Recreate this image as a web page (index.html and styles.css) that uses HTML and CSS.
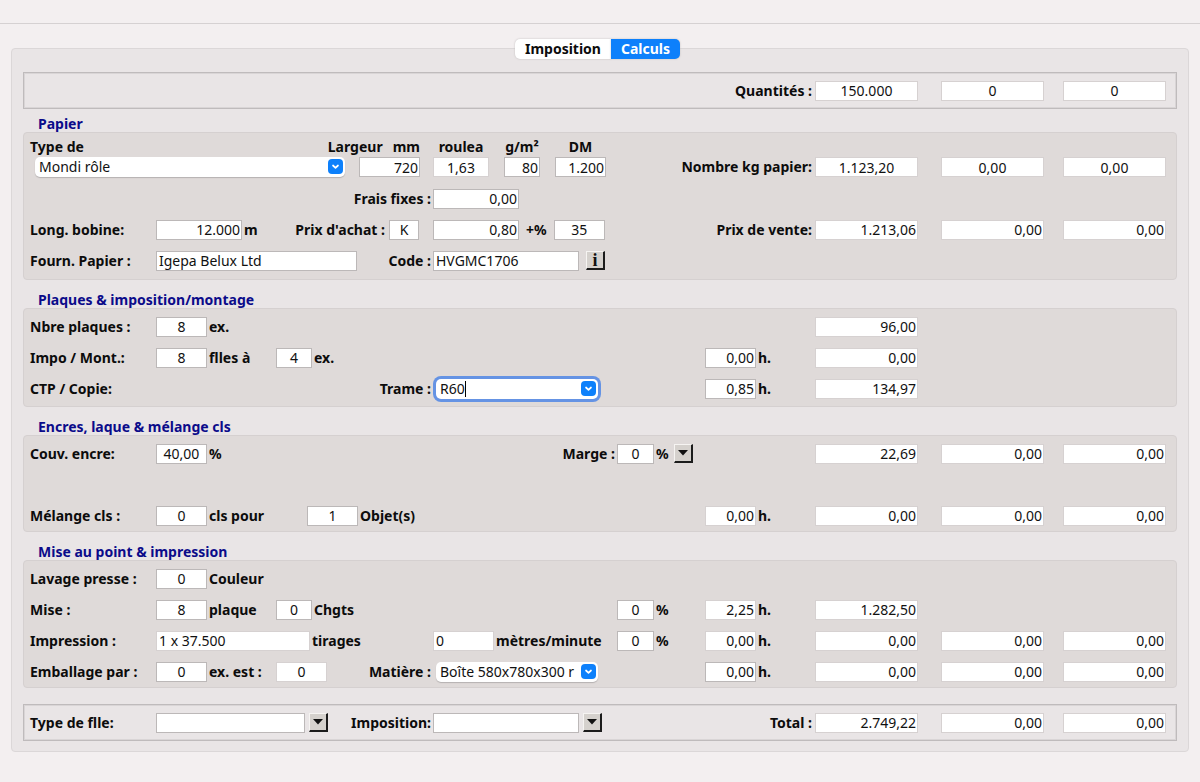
FILE: index.html
```html
<!DOCTYPE html>
<html lang="fr">
<head>
<meta charset="utf-8">
<title>Calculs</title>
<link rel="stylesheet" href="styles.css">
</head>
<body>
<svg class="defs" aria-hidden="true">
  <symbol id="chev" viewBox="0 0 15 15"><path d="M5 6.5 7.5 8.8 10 6.5" fill="none" stroke="#fff" stroke-width="1.7" stroke-linecap="round" stroke-linejoin="round"/></symbol>
  <symbol id="tri" viewBox="0 0 10 6"><path d="M0 0h10L5 5.500z" fill="#111"/></symbol>
</svg>
<div class="topbar"></div>
<main class="window">
  <nav class="tabs">
    <button class="tab" type="button">Imposition</button><button class="tab active" type="button">Calculs</button>
  </nav>
  <form class="sheet">
    <div class="frame">
      <div class="row">
        <label class="cell lead" for="qte1">Quantités :</label>
        <div class="cell q1"><input id="qte1" class="flat q center" value="150.000"></div>
        <div class="cell q2"><input aria-label="Quantité 2" class="flat q center" value="0"></div>
        <div class="cell q3"><input aria-label="Quantité 3" class="flat q center" value="0"></div>
      </div>
    </div>

    <h2>Papier</h2>
    <section class="panel paper">
      <div class="row heads">
        <label class="cell c1" for="papier">Type de</label>
        <div class="cell c3 right"><label for="largeur">Largeur</label><span class="unit">mm</span></div>
        <div class="cell c4 specs"><label class="w-roll" for="rouleau">roulea</label><label class="w-xs" for="gm">g/m²</label><label class="w-s" for="dm">DM</label></div>
      </div>
      <div class="row fields">
        <div class="cell c1to3"><span class="picker grow"><select id="papier"><option>Mondi rôle</option></select><svg class="chev" aria-hidden="true"><use href="#chev"/></svg></span><input id="largeur" class="w-m num" value="720"></div>
        <div class="cell c4 specs"><input id="rouleau" class="flat w-roll center" value="1,63"><input id="gm" class="w-xs num" value="80"><input id="dm" class="w-s num" value="1.200"></div>
        <label class="cell lead" for="kg1">Nombre kg papier:</label>
        <div class="cell q1"><input id="kg1" class="flat q center" value="1.123,20"></div>
        <div class="cell q2"><input aria-label="Nombre kg papier 2" class="flat q center" value="0,00"></div>
        <div class="cell q3"><input aria-label="Nombre kg papier 3" class="flat q center" value="0,00"></div>
      </div>
      <div class="row">
        <label class="cell c3 right" for="frais">Frais fixes :</label>
        <div class="cell c4"><input id="frais" class="w-l num" value="0,00"></div>
      </div>
      <div class="row">
        <label class="cell c1" for="bobine">Long. bobine:</label>
        <div class="cell c2"><input id="bobine" class="w-l num" value="12.000"><span>m</span></div>
        <div class="cell c3 right achat"><label for="achat">Prix d'achat :</label><input id="achat" class="w-k center" value="K"></div>
        <div class="cell c4 price"><input aria-label="Prix" class="w-l num" value="0,80"><label for="pct">+%</label><input id="pct" class="w-s center" value="35"></div>
        <label class="cell lead" for="vente1">Prix de vente:</label>
        <div class="cell q1"><input id="vente1" class="flat q num" value="1.213,06"></div>
        <div class="cell q2"><input aria-label="Prix de vente 2" class="flat q num" value="0,00"></div>
        <div class="cell q3"><input aria-label="Prix de vente 3" class="flat q num" value="0,00"></div>
      </div>
      <div class="row">
        <label class="cell c1" for="fourn">Fourn. Papier :</label>
        <div class="cell c2"><input id="fourn" class="w-xl" value="Igepa Belux Ltd"></div>
        <label class="cell c3 right" for="code">Code :</label>
        <div class="cell c4 code"><input id="code" class="w-code" value="HVGMC1706"><button class="bevel info" type="button" aria-label="Informations">i</button></div>
      </div>
    </section>

    <h2>Plaques &amp; imposition/montage</h2>
    <section class="panel plates">
      <div class="row">
        <label class="cell c1" for="plaques">Nbre plaques :</label>
        <div class="cell c2"><input id="plaques" class="w-s center" value="8"><span>ex.</span></div>
        <div class="cell q1"><input aria-label="Coût plaques" class="flat q num" value="96,00"></div>
      </div>
      <div class="row">
        <label class="cell c1" for="impo">Impo / Mont.:</label>
        <div class="cell c2"><input id="impo" class="w-s center" value="8"><label for="flles">flles à</label></div>
        <div class="cell c3"><input id="flles" class="w-xs center" value="4"><span>ex.</span></div>
        <div class="cell c6"><input id="h1" class="w-s num" value="0,00"><label for="h1">h.</label></div>
        <div class="cell q1"><input aria-label="Coût montage" class="flat q num" value="0,00"></div>
      </div>
      <div class="row">
        <span class="cell c1">CTP / Copie:</span>
        <label class="cell c3 right" for="trame">Trame :</label>
        <div class="cell c4"><span class="picker combo focused"><input id="trame" value="R60"><span class="caret"></span><svg class="chev" aria-hidden="true"><use href="#chev"/></svg></span></div>
        <div class="cell c6"><input id="h2" class="w-s num" value="0,85"><label for="h2">h.</label></div>
        <div class="cell q1"><input aria-label="Coût copie" class="flat q num" value="134,97"></div>
      </div>
    </section>

    <h2>Encres, laque &amp; mélange cls</h2>
    <section class="panel">
      <div class="row">
        <label class="cell c1" for="encre">Couv. encre:</label>
        <div class="cell c2"><input id="encre" class="w-s center" value="40,00"><span>%</span></div>
        <label class="cell c4 right" for="marge">Marge :</label>
        <div class="cell c5"><input id="marge" class="w-s2 center" value="0"><span class="percent">%</span><button class="bevel" type="button" aria-label="Choisir la marge"><svg class="tri" aria-hidden="true"><use href="#tri"/></svg></button></div>
        <div class="cell q1"><input aria-label="Coût encre 1" class="flat q num" value="22,69"></div>
        <div class="cell q2"><input aria-label="Coût encre 2" class="flat q num" value="0,00"></div>
        <div class="cell q3"><input aria-label="Coût encre 3" class="flat q num" value="0,00"></div>
      </div>
      <div class="row"></div>
      <div class="row">
        <label class="cell c1" for="melange">Mélange cls :</label>
        <div class="cell c2"><input id="melange" class="w-s center" value="0"><label for="objets">cls pour</label></div>
        <div class="cell c3 indent"><input id="objets" class="w-s center" value="1"><span>Objet(s)</span></div>
        <div class="cell c6"><input id="h3" class="flat w-s num" value="0,00"><label for="h3">h.</label></div>
        <div class="cell q1"><input aria-label="Coût mélange 1" class="flat q num" value="0,00"></div>
        <div class="cell q2"><input aria-label="Coût mélange 2" class="flat q num" value="0,00"></div>
        <div class="cell q3"><input aria-label="Coût mélange 3" class="flat q num" value="0,00"></div>
      </div>
    </section>

    <h2>Mise au point &amp; impression</h2>
    <section class="panel">
      <div class="row">
        <label class="cell c1" for="lavage">Lavage presse :</label>
        <div class="cell c2"><input id="lavage" class="w-s center" value="0"><span>Couleur</span></div>
      </div>
      <div class="row">
        <label class="cell c1" for="mise">Mise :</label>
        <div class="cell c2"><input id="mise" class="w-s center" value="8"><span>plaque</span></div>
        <div class="cell c3"><input id="chgts" class="w-xs center" value="0"><label for="chgts">Chgts</label></div>
        <div class="cell c5"><input id="p1" class="w-s2 center" value="0"><label for="p1">%</label></div>
        <div class="cell c6"><input id="h4" class="flat w-s num" value="2,25"><label for="h4">h.</label></div>
        <div class="cell q1"><input aria-label="Coût mise" class="flat q num" value="1.282,50"></div>
      </div>
      <div class="row">
        <label class="cell c1" for="tirages">Impression :</label>
        <div class="cell c2to3"><input id="tirages" class="flat w-run" value="1 x 37.500"><span>tirages</span></div>
        <div class="cell c4"><input id="vitesse" class="flat w-m" value="0"><label for="vitesse">mètres/minute</label></div>
        <div class="cell c5"><input id="p2" class="w-s2 center" value="0"><label for="p2">%</label></div>
        <div class="cell c6"><input id="h5" class="flat w-s num" value="0,00"><label for="h5">h.</label></div>
        <div class="cell q1"><input aria-label="Coût impression 1" class="flat q num" value="0,00"></div>
        <div class="cell q2"><input aria-label="Coût impression 2" class="flat q num" value="0,00"></div>
        <div class="cell q3"><input aria-label="Coût impression 3" class="flat q num" value="0,00"></div>
      </div>
      <div class="row">
        <label class="cell c1" for="emballage">Emballage par :</label>
        <div class="cell c2"><input id="emballage" class="w-s center" value="0"><label for="est">ex. est :</label></div>
        <div class="cell c3"><input id="est" class="flat w-s center" value="0"></div>
        <label class="cell c3 right" for="matiere">Matière :</label>
        <div class="cell c4"><span class="picker combo"><select id="matiere"><option>Boîte 580x780x300 r</option></select><svg class="chev" aria-hidden="true"><use href="#chev"/></svg></span></div>
        <div class="cell c6"><input id="h6" class="w-s num" value="0,00"><label for="h6">h.</label></div>
        <div class="cell q1"><input aria-label="Coût emballage 1" class="flat q num" value="0,00"></div>
        <div class="cell q2"><input aria-label="Coût emballage 2" class="flat q num" value="0,00"></div>
        <div class="cell q3"><input aria-label="Coût emballage 3" class="flat q num" value="0,00"></div>
      </div>
    </section>

    <div class="frame total">
      <div class="row">
        <label class="cell c1" for="flle">Type de flle:</label>
        <div class="cell c2 pair"><input id="flle" class="w-type" value=""><button class="bevel" type="button" aria-label="Choisir le type de flle"><svg class="tri" aria-hidden="true"><use href="#tri"/></svg></button></div>
        <label class="cell c3 right" for="imposition">Imposition:</label>
        <div class="cell c4 pair"><input id="imposition" class="w-code" value=""><button class="bevel" type="button" aria-label="Choisir l'imposition"><svg class="tri" aria-hidden="true"><use href="#tri"/></svg></button></div>
        <label class="cell lead" for="total1">Total :</label>
        <div class="cell q1"><input id="total1" class="flat q num" value="2.749,22"></div>
        <div class="cell q2"><input aria-label="Total 2" class="flat q num" value="0,00"></div>
        <div class="cell q3"><input aria-label="Total 3" class="flat q num" value="0,00"></div>
      </div>
    </div>
  </form>
</main>
</body>
</html>
```
FILE: styles.css
```css
* { box-sizing: border-box; }

body {
  margin: 0;
  background: #f3eff0;
  color: #0c0c0c;
  font: bold 14px/18px "Noto Sans", "Open Sans", sans-serif;
}

.defs { display: none; }

.topbar { height: 24px; border-bottom: 1px solid #d5d1d2; }

.window { padding: 15px 11px 24px; }

.tabs {
  position: relative;
  z-index: 1;
  display: flex;
  justify-content: center;
  margin-bottom: -11px;
  padding-right: 5px;
}

.tab {
  height: 20px;
  padding: 0 10px;
  border: 0;
  border-radius: 5px 0 0 5px;
  background: #fff;
  color: #0c0c0c;
  font: inherit;
  box-shadow: 0 0 2px #bdb9ba;
}

.tab.active {
  border-radius: 0 5px 5px 0;
  background: #0d80fb;
  color: #fff;
}

.sheet {
  padding: 23px 11px 10px;
  border: 1px solid #dbd7d8;
  border-radius: 4px;
  background: #e9e5e6;
}

.frame {
  padding: 2px 0;
  border: 1px solid #bfbbbc;
  box-shadow: inset 0 0 0 1px #d9d5d6;
}

.frame.total { margin-top: 16px; }

h2 {
  margin: 12px 0 0 15px;
  color: #0b0b8a;
  font-size: 14px;
  line-height: 16px;
}

.frame + h2 { margin-top: 7px; }

.panel {
  padding: 2px 0 0;
  border: 1px solid #d5d0d0;
  border-radius: 4px;
  background: #dfdad9;
}

.panel.paper { padding: 5px 0 3px; }
.panel.plates { padding-bottom: 2px; }

.row {
  display: grid;
  grid-template-columns: 126fr 120fr 157fr 184fr 88fr 110fr 126fr 122fr 103fr;
  align-items: center;
  height: 31px;
  padding: 0 10px 0 6px;
}

.row.heads { height: 18px; }

.row.fields { height: 22px; margin-bottom: 5px; }

.cell {
  grid-row: 1;
  display: flex;
  align-items: center;
  gap: 2px;
  min-width: 0;
  white-space: nowrap;
}

.c1 { grid-column: 1; }
.c2 { grid-column: 2; }
.c3 { grid-column: 3; }
.c4 { grid-column: 4; }
.c5 { grid-column: 5; }
.c6 { grid-column: 6; }
.q1 { grid-column: 7; }
.q2 { grid-column: 8; }
.q3 { grid-column: 9; }
.c1to3 { grid-column: 1 / 4; gap: 14px; padding: 0 13px 0 5px; }
.c2to3 { grid-column: 2 / 4; }
.lead { grid-column: 5 / 7; justify-content: flex-end; padding-right: 3px; }

.right { justify-content: flex-end; padding-right: 2px; }
.heads .right { gap: 10px; padding-right: 13px; }
.achat { gap: 4px; padding-right: 14px; }
.indent { padding-left: 31px; }
.specs { gap: 15px; }
.specs label { text-align: center; }
.price { gap: 7px; }
.pair { gap: 4px; }
.code { gap: 7px; }
.percent { margin-right: 3px; }

input, select {
  min-width: 0;
  height: 20px;
  margin: 0;
  padding: 0 2px;
  border: 1px solid #bcb8b8;
  border-radius: 0;
  outline: 0;
  background: #fff;
  color: #111;
  font: 14px/18px "Noto Sans", "Open Sans", sans-serif;
}

input { flex: none; }
input.flat { border-color: #d6d1d1; }
input.center { text-align: center; }
input.num { padding-right: 1px; text-align: right; }

.q { width: 103px; }
.w-k { width: 30px; }
.w-xs { width: 36px; }
.w-s2 { width: 37px; }
.w-s { width: 51px; }
.w-roll { width: 56px; }
.w-m { width: 61px; }
.w-l { width: 86px; }
.w-code { width: 146px; }
.w-type { width: 149px; }
.w-run { width: 154px; }
.w-xl { width: 201px; }

.picker {
  position: relative;
  display: flex;
  height: 20px;
  border-radius: 5px;
  background: #fff;
  box-shadow: 0 1px 1px #b5b1b1;
}

.picker.grow { flex: 1; }
.picker.combo { width: 162px; margin-left: 3px; }
.picker.focused { box-shadow: 0 0 0 3px #6593e4; }

.picker select, .picker input {
  flex: 1;
  width: 100%;
  padding: 0 19px 0 4px;
  border: 0;
  border-radius: 5px;
  background: transparent;
  appearance: none;
}

.chev {
  position: absolute;
  top: 2px;
  right: 2px;
  width: 15px;
  height: 15px;
  border-radius: 4px;
  background: #0d80fb;
  pointer-events: none;
}

.caret {
  position: absolute;
  top: 2px;
  left: 29px;
  width: 1px;
  height: 16px;
  background: #000;
}

.bevel {
  display: flex;
  flex: none;
  align-items: center;
  justify-content: center;
  width: 19px;
  height: 19px;
  padding: 0;
  border: solid;
  border-width: 1px 2px 2px 1px;
  border-color: #f6f4f2 #1c1c1c #1c1c1c #f6f4f2;
  background: #d5d1cd;
  color: #111;
}

.info { font: bold 18px/16px "Liberation Serif", serif; }

.tri { width: 10px; height: 6px; }
```
